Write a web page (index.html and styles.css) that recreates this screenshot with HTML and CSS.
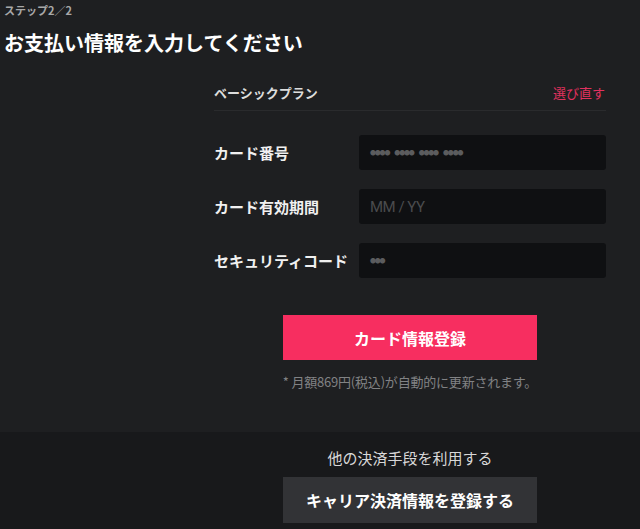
FILE: index.html
```html
<!DOCTYPE html>
<html lang="ja">
<head>
<meta charset="utf-8">
<link rel="stylesheet" href="styles.css">
</head>
<body>
<div class="top">
  <div class="step">ステップ2／2</div>
  <h1 class="title">お支払い情報を入力してください</h1>
  <div class="form">
    <div class="plan">
      <span class="plan-name">ベーシックプラン</span>
      <span class="plan-change">選び直す</span>
    </div>
    <div class="row">
      <label class="label">カード番号</label>
      <div class="input"><span class="dots">●●●● ●●●● ●●●● ●●●●</span></div>
    </div>
    <div class="row">
      <label class="label">カード有効期間</label>
      <div class="input"><span class="ph">MM / YY</span></div>
    </div>
    <div class="row">
      <label class="label">セキュリティコード</label>
      <div class="input"><span class="dots">●●●</span></div>
    </div>
    <div class="actions">
      <button class="btn-primary">カード情報登録</button>
      <p class="note">* 月額869円(税込)が自動的に更新されます。</p>
    </div>
  </div>
</div>
<div class="bottom">
  <div class="other">
    <p class="other-title">他の決済手段を利用する</p>
    <button class="btn-secondary">キャリア決済情報を登録する</button>
  </div>
</div>
</body>
</html>
```
FILE: styles.css
```css
html, body {
  margin: 0;
  padding: 0;
  background: #18191b;
  font-family: "Noto Sans CJK JP", "Noto Sans", sans-serif;
  color: #fff;
}
.top {
  background: #1e1f21;
  padding: 3px 0 0;
  height: 429px;
}
.step {
  font-size: 11px;
  font-weight: 700;
  color: #a8a8a8;
  padding-left: 4px;
  line-height: 14px;
}
.title {
  margin: 14px 0 0;
  padding-left: 4px;
  font-size: 20px;
  font-weight: 700;
  line-height: 24px;
  color: #fff;
}
.form {
  margin: 24px 0 0 214px;
  width: 392px;
}
.plan {
  display: flex;
  justify-content: space-between;
  align-items: center;
  height: 26px;
  border-bottom: 1px solid #2a2b2d;
  font-size: 13px;
  font-weight: 700;
  padding-bottom: 5px;
}
.plan-name { color: #dcdcdc; }
.plan-change { color: #e0315f; font-weight: 400; margin-right: 1px; }
.plan + .row { margin-top: 24px; }
.row {
  display: flex;
  align-items: center;
}
.row + .row { margin-top: 19px; }
.label {
  width: 145px;
  font-size: 15px;
  font-weight: 700;
  color: #f0f0f0;
}
.input {
  flex: 1;
  height: 35px;
  background: #0f1012;
  border-radius: 3px;
  display: flex;
  align-items: center;
  padding-left: 11px;
}
.dots {
  font-size: 6px;
  color: #5b5c5e;
  letter-spacing: -1.2px;
  word-spacing: 5px;
}
.ph {
  font-family: "Roboto", "Noto Sans", sans-serif;
  font-size: 15px;
  color: #4a4b4d;
  letter-spacing: -0.5px;
}
.actions {
  display: flex;
  flex-direction: column;
  align-items: center;
  margin-top: 37px;
}
.btn-primary, .btn-secondary {
  width: 254px;
  height: 45px;
  border: none;
  font-family: inherit;
  font-size: 16px;
  font-weight: 700;
  color: #fff;
  cursor: pointer;
}
.btn-primary {
  background: #f72e60;
}
.btn-secondary {
  background: #323336;
  height: 46px;
}
.note {
  margin: 12px 0 0;
  font-size: 13px;
  color: #818284;
  letter-spacing: -0.2px;
}
.bottom {
  background: #18191b;
  padding-top: 16px;
  height: 100px;
}
.other {
  margin-left: 214px;
  width: 392px;
  display: flex;
  flex-direction: column;
  align-items: center;
}
.other-title {
  margin: 0 0 9px;
  font-size: 15px;
  color: #d8d8d8;
  line-height: 20px;
}
```
